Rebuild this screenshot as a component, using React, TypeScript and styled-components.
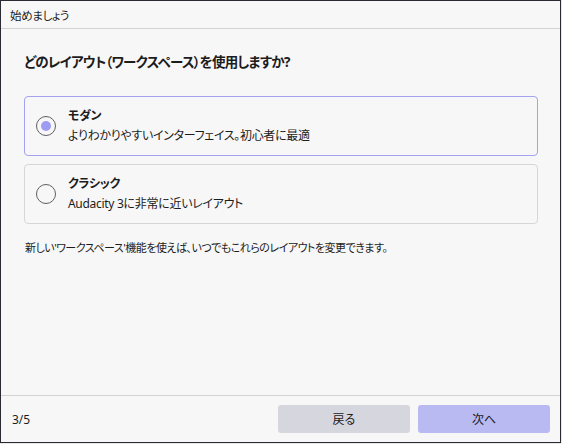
import React, { useState } from "react";
import styled, { createGlobalStyle } from "styled-components";

const Global = createGlobalStyle`
  html, body { margin: 0; padding: 0; background: #e8e8ea; }
  body { font-family: "Noto Sans", "Noto Sans CJK JP", sans-serif; font-feature-settings: "palt"; }
  * { box-sizing: border-box; }
`;

const Window = styled.div`
  width: 561px;
  height: 443px;
  border: 1px solid #2a2a33;
  background: #f7f7f7;
  display: flex;
  flex-direction: column;
  color: #1c1c1c;
`;

const TitleBar = styled.div`
  height: 28px;
  flex: none;
  display: flex;
  align-items: center;
  padding-left: 9px;
  font-size: 11.5px;
  letter-spacing: -0.3px;
  border-bottom: 1px solid #d2d2d4;
`;

const Content = styled.div`
  flex: 1;
  display: flex;
  flex-direction: column;
  padding: 22px 22px 0 23px;
`;

const Heading = styled.h1`
  margin: 0 0 23px;
  font-size: 13.5px;
  letter-spacing: -0.75px;
  line-height: 22px;
  font-weight: 700;
`;

const Options = styled.div`
  display: flex;
  flex-direction: column;
  gap: 8px;
`;

const Card = styled.label<{ $selected: boolean }>`
  height: 60px;
  display: flex;
  align-items: center;
  gap: 12px;
  padding: 0 11px;
  border: 1px solid ${(p) => (p.$selected ? "#a3a3f0" : "#d6d6d8")};
  border-radius: 4px;
  cursor: pointer;
`;

const Radio = styled.span<{ $checked: boolean }>`
  width: 20px;
  height: 20px;
  flex: none;
  border-radius: 50%;
  border: 1.5px solid #5f5f64;
  display: flex;
  align-items: center;
  justify-content: center;
  &::after {
    content: "";
    width: 10px;
    height: 10px;
    border-radius: 50%;
    background: ${(p) => (p.$checked ? "#9c9cf2" : "transparent")};
  }
`;

const Texts = styled.div`
  display: flex;
  flex-direction: column;
`;

const OptTitle = styled.div`
  font-size: 12px;
  letter-spacing: -0.3px;
  line-height: 20px;
  font-weight: 700;
`;

const OptDesc = styled.div`
  font-size: 12px;
  letter-spacing: -0.3px;
  line-height: 20px;
`;

const Note = styled.p`
  margin: 14px 0 0 1px;
  font-size: 11px;
  letter-spacing: -0.5px;
  line-height: 20px;
`;

const Footer = styled.div`
  height: 47px;
  flex: none;
  border-top: 1px solid #d2d2d4;
  display: flex;
  align-items: center;
  padding: 0 10px 0 11px;
  font-size: 12px;
`;

const Step = styled.span`
  flex: 1;
`;

const Buttons = styled.div`
  display: flex;
  gap: 8px;
`;

const Button = styled.button<{ $primary?: boolean }>`
  width: 132px;
  height: 28px;
  border: none;
  border-radius: 3px;
  font-family: inherit;
  font-feature-settings: inherit;
  font-size: 12px;
  color: #1c1c1c;
  background: ${(p) => (p.$primary ? "#babaf2" : "#d6d6de")};
`;

const options = [
  { id: "modern", title: "モダン", desc: "よりわかりやすいインターフェイス。初心者に最適" },
  { id: "classic", title: "クラシック", desc: "Audacity 3に非常に近いレイアウト" },
];

export default function App() {
  const [sel, setSel] = useState("modern");
  return (
    <>
      <Global />
      <Window>
        <TitleBar>始めましょう</TitleBar>
        <Content>
          <Heading>どのレイアウト（ワークスペース）を使用しますか?</Heading>
          <Options>
            {options.map((o) => (
              <Card key={o.id} $selected={sel === o.id} onClick={() => setSel(o.id)}>
                <Radio $checked={sel === o.id} />
                <Texts>
                  <OptTitle>{o.title}</OptTitle>
                  <OptDesc>{o.desc}</OptDesc>
                </Texts>
              </Card>
            ))}
          </Options>
          <Note>新しい'ワークスペース'機能を使えば、いつでもこれらのレイアウトを変更できます。</Note>
        </Content>
        <Footer>
          <Step>3/5</Step>
          <Buttons>
            <Button>戻る</Button>
            <Button $primary>次へ</Button>
          </Buttons>
        </Footer>
      </Window>
    </>
  );
}
